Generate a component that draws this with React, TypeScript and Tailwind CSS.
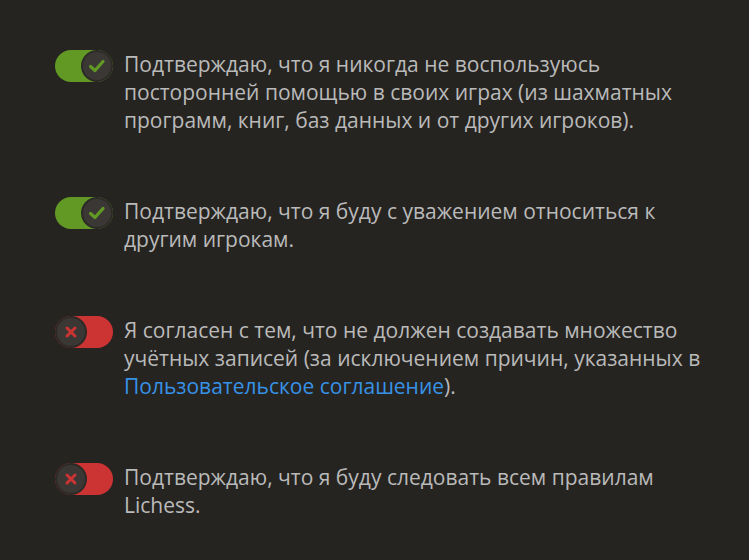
import { useState } from "react";

type Agreement = {
  id: string;
  text: React.ReactNode;
  initial: boolean;
};

const agreements: Agreement[] = [
  {
    id: "assistance",
    initial: true,
    text: "Подтверждаю, что я никогда не воспользуюсь посторонней помощью в своих играх (из шахматных программ, книг, баз данных и от других игроков).",
  },
  {
    id: "nice",
    initial: true,
    text: "Подтверждаю, что я буду с уважением относиться к другим игрокам.",
  },
  {
    id: "account",
    initial: false,
    text: (
      <>
        Я согласен с тем, что не должен создавать множество учётных записей (за
        исключением причин, указанных в{" "}
        <a href="#" className="text-[#3692e7] hover:underline">
          Пользовательское соглашение
        </a>
        ).
      </>
    ),
  },
  {
    id: "policy",
    initial: false,
    text: "Подтверждаю, что я буду следовать всем правилам Lichess.",
  },
];

function Toggle({ on, onClick }: { on: boolean; onClick: () => void }) {
  return (
    <button
      type="button"
      onClick={onClick}
      className={`relative shrink-0 w-[58px] h-[32px] rounded-full ${
        on ? "bg-[#629924]" : "bg-[#cc3333]"
      }`}
    >
      <span
        className={`absolute top-0 w-[32px] h-[32px] rounded-full bg-[#3a3734] border-2 border-[#2c2a27] flex items-center justify-center ${
          on ? "right-0" : "left-0"
        }`}
      >
        {on ? (
          <svg width="20" height="20" viewBox="0 0 20 20">
            <path
              d="M3.5 10.5 L8 14.5 L16 5.5"
              fill="none"
              stroke="#629924"
              strokeWidth="3.2"
              strokeLinecap="round"
              strokeLinejoin="round"
            />
          </svg>
        ) : (
          <svg width="14" height="14" viewBox="0 0 14 14">
            <path
              d="M3 3 L11 11 M11 3 L3 11"
              fill="none"
              stroke="#cc3333"
              strokeWidth="3"
              strokeLinecap="round"
            />
          </svg>
        )}
      </span>
    </button>
  );
}

export default function App() {
  const [checked, setChecked] = useState<Record<string, boolean>>(
    Object.fromEntries(agreements.map((a) => [a.id, a.initial]))
  );

  return (
    <main
      className="min-h-screen w-full bg-[#262421] text-[#bababa] pt-[50px] pl-[55px] pr-[20px]"
      style={{ fontFamily: '"Open Sans", "Noto Sans", sans-serif' }}
    >
      <div className="flex flex-col gap-[63px]">
        {agreements.map((a) => (
          <div key={a.id} className="flex items-start gap-[11px]">
            <Toggle
              on={checked[a.id]}
              onClick={() =>
                setChecked((prev) => ({ ...prev, [a.id]: !prev[a.id] }))
              }
            />
            <p className="text-[21px] leading-[28px] max-w-[580px]">{a.text}</p>
          </div>
        ))}
      </div>
    </main>
  );
}
